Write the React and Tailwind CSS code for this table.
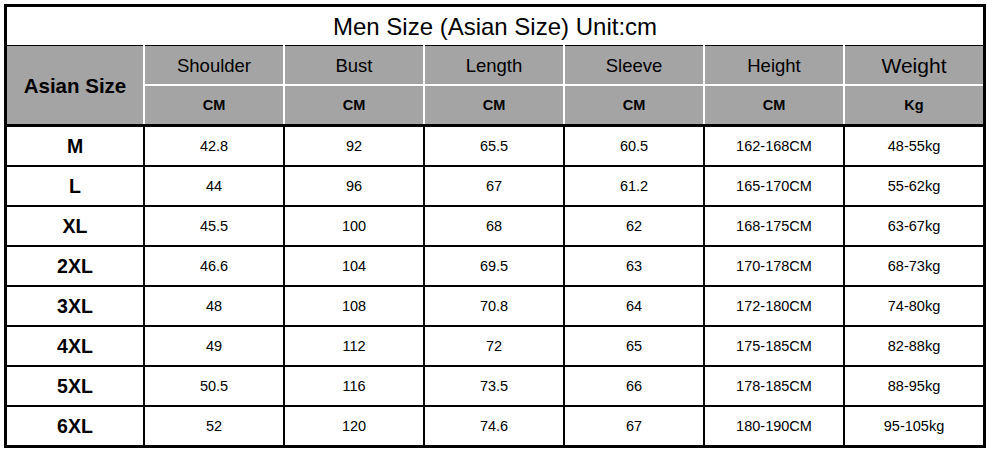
const cols = [
  { name: "Shoulder", unit: "CM" },
  { name: "Bust", unit: "CM" },
  { name: "Length", unit: "CM" },
  { name: "Sleeve", unit: "CM" },
  { name: "Height", unit: "CM" },
  { name: "Weight", unit: "Kg", big: true },
];

const rows = [
  ["M", "42.8", "92", "65.5", "60.5", "162-168CM", "48-55kg"],
  ["L", "44", "96", "67", "61.2", "165-170CM", "55-62kg"],
  ["XL", "45.5", "100", "68", "62", "168-175CM", "63-67kg"],
  ["2XL", "46.6", "104", "69.5", "63", "170-178CM", "68-73kg"],
  ["3XL", "48", "108", "70.8", "64", "172-180CM", "74-80kg"],
  ["4XL", "49", "112", "72", "65", "175-185CM", "82-88kg"],
  ["5XL", "50.5", "116", "73.5", "66", "178-185CM", "88-95kg"],
  ["6XL", "52", "120", "74.6", "67", "180-190CM", "95-105kg"],
];

const grid = "grid grid-cols-[136px_repeat(6,138px)] gap-x-[2px]";

export default function App() {
  return (
    <div className="w-[990px] h-[450px] bg-white pt-[4px] pl-[4px] font-['Liberation_Sans',Arial,sans-serif] text-black">
      <div className="w-[982px] border-[3px] border-black bg-white">
        {/* title */}
        <div className="h-[38px] flex items-center justify-center text-[24px] leading-none pt-[1px]">
          Men Size (Asian Size) Unit:cm
        </div>

        {/* header */}
        <div className={`${grid} grid-rows-[39px_38px] gap-y-[2px] bg-white`}>
          <div className="row-span-2 bg-[#a4a4a4] border-t border-black flex items-center justify-center font-bold text-[20.5px] pt-[2px]">
            Asian Size
          </div>
          {cols.map((c) => (
            <div
              key={c.name}
              className={`bg-[#a4a4a4] border-t border-black flex items-center justify-center pt-[1px] ${
                c.big ? "text-[21px]" : "text-[18.5px]"
              }`}
            >
              {c.name}
            </div>
          ))}
          {cols.map((c) => (
            <div
              key={c.name + "u"}
              className="bg-[#a4a4a4] flex items-center justify-center font-bold text-[14.5px] pt-[2px]"
            >
              {c.unit}
            </div>
          ))}
        </div>

        {/* body */}
        <div className={`${grid} auto-rows-[38px] gap-y-[2px] bg-black border-t-[3px] border-black`}>
          {rows.map((r) =>
            r.map((v, i) => (
              <div
                key={r[0] + i}
                className={`bg-white flex items-center justify-center pt-[2px] ${
                  i === 0 ? "font-bold text-[19.5px]" : "text-[14.5px]"
                }`}
              >
                {v}
              </div>
            ))
          )}
        </div>
      </div>
    </div>
  );
}
